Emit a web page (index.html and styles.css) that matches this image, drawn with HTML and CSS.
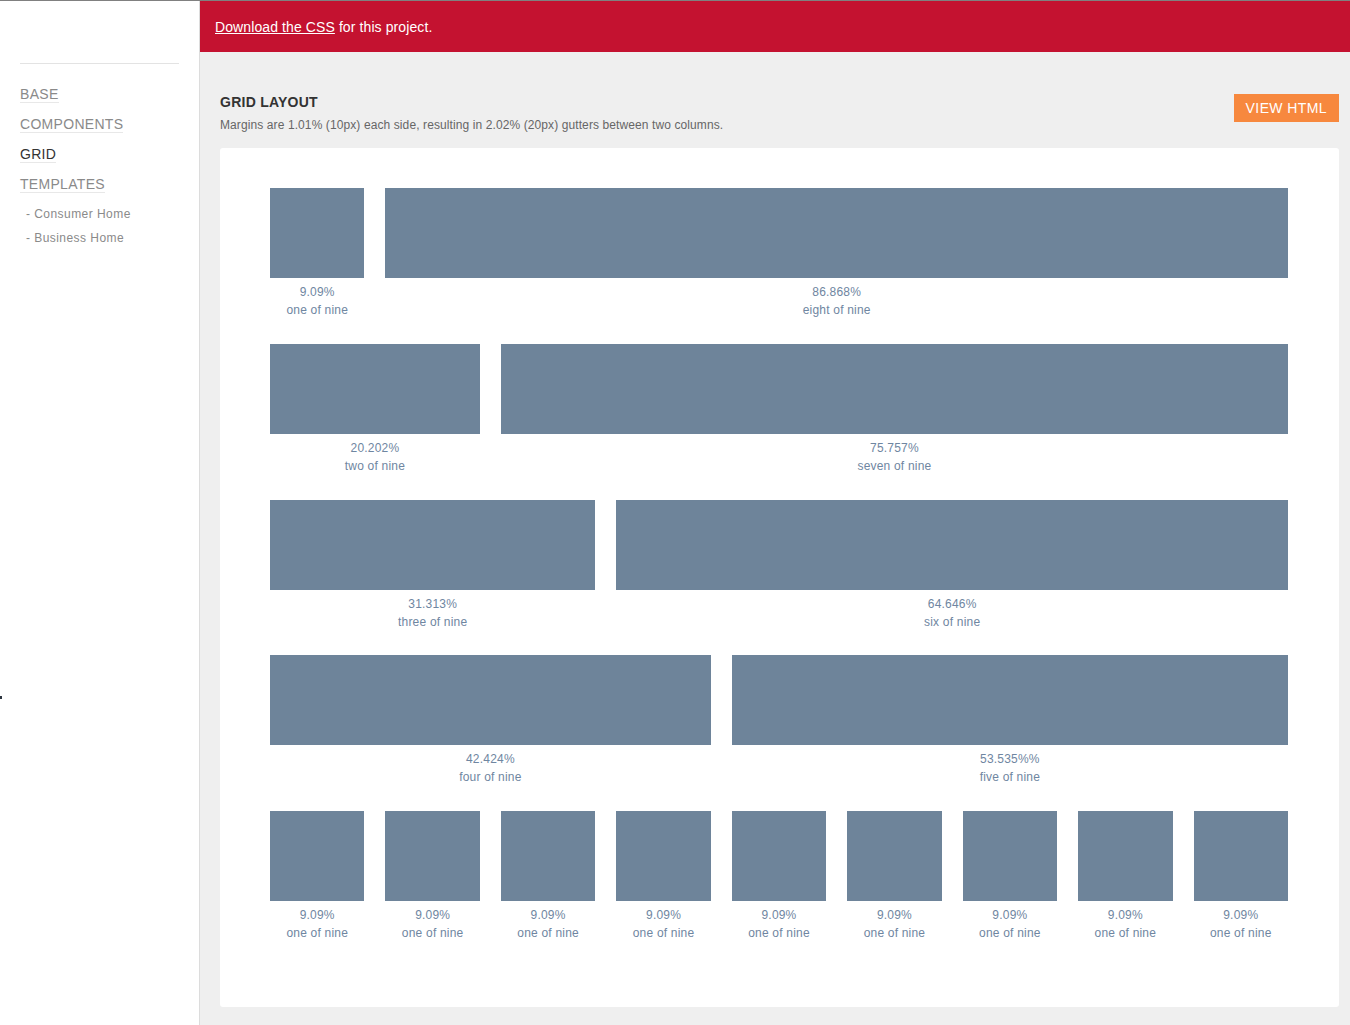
FILE: index.html
```html
<!DOCTYPE html>
<html lang="en">
<head>
<meta charset="utf-8">
<title>Grid Layout</title>
<link rel="stylesheet" href="styles.css">
</head>
<body>
<div class="page">
  <aside class="sidebar">
    <hr class="sidebar-rule">
    <nav class="nav">
      <div class="nav-item"><a href="#" class="nav-link">BASE</a></div>
      <div class="nav-item"><a href="#" class="nav-link">COMPONENTS</a></div>
      <div class="nav-item"><a href="#" class="nav-link nav-link-active">GRID</a></div>
      <div class="nav-item"><a href="#" class="nav-link">TEMPLATES</a></div>
      <ul class="subnav">
        <li><a href="#" class="subnav-link">- Consumer Home</a></li>
        <li><a href="#" class="subnav-link">- Business Home</a></li>
      </ul>
    </nav>
    <span class="stray-dot"></span>
  </aside>
  <main class="main">
    <div class="banner"><a href="#" class="banner-link">Download the CSS</a> for this project.</div>
    <section class="content">
      <div class="content-head">
        <div class="head-text">
          <h2 class="title">GRID LAYOUT</h2>
          <p class="subtitle">Margins are 1.01% (10px) each side, resulting in 2.02% (20px) gutters between two columns.</p>
        </div>
        <a href="#" class="btn">VIEW HTML</a>
      </div>
      <div class="card">
        <div class="grid-row">
          <div class="cell span-1"><div class="block"></div><div class="cap">9.09%</div><div class="cap">one of nine</div></div>
          <div class="cell span-8"><div class="block"></div><div class="cap">86.868%</div><div class="cap">eight of nine</div></div>
        </div>
        <div class="grid-row">
          <div class="cell span-2"><div class="block"></div><div class="cap">20.202%</div><div class="cap">two of nine</div></div>
          <div class="cell span-7"><div class="block"></div><div class="cap">75.757%</div><div class="cap">seven of nine</div></div>
        </div>
        <div class="grid-row">
          <div class="cell span-3"><div class="block"></div><div class="cap">31.313%</div><div class="cap">three of nine</div></div>
          <div class="cell span-6"><div class="block"></div><div class="cap">64.646%</div><div class="cap">six of nine</div></div>
        </div>
        <div class="grid-row">
          <div class="cell span-4"><div class="block"></div><div class="cap">42.424%</div><div class="cap">four of nine</div></div>
          <div class="cell span-5"><div class="block"></div><div class="cap">53.535%%</div><div class="cap">five of nine</div></div>
        </div>
        <div class="grid-row">
          <div class="cell span-1"><div class="block"></div><div class="cap">9.09%</div><div class="cap">one of nine</div></div>
          <div class="cell span-1"><div class="block"></div><div class="cap">9.09%</div><div class="cap">one of nine</div></div>
          <div class="cell span-1"><div class="block"></div><div class="cap">9.09%</div><div class="cap">one of nine</div></div>
          <div class="cell span-1"><div class="block"></div><div class="cap">9.09%</div><div class="cap">one of nine</div></div>
          <div class="cell span-1"><div class="block"></div><div class="cap">9.09%</div><div class="cap">one of nine</div></div>
          <div class="cell span-1"><div class="block"></div><div class="cap">9.09%</div><div class="cap">one of nine</div></div>
          <div class="cell span-1"><div class="block"></div><div class="cap">9.09%</div><div class="cap">one of nine</div></div>
          <div class="cell span-1"><div class="block"></div><div class="cap">9.09%</div><div class="cap">one of nine</div></div>
          <div class="cell span-1"><div class="block"></div><div class="cap">9.09%</div><div class="cap">one of nine</div></div>
        </div>
      </div>
    </section>
  </main>
</div>
</body>
</html>
```

FILE: styles.css
```css
* { box-sizing: border-box; }

html, body {
  margin: 0;
  padding: 0;
}

body {
  font-family: "Liberation Sans", Arial, sans-serif;
  border-top: 1px solid #808080;
  background: #efefef;
  overflow: hidden;
}

.page {
  display: flex;
  min-height: calc(100vh - 1px);
}

.sidebar {
  position: relative;
  width: 200px;
  flex: 0 0 200px;
  background: #fff;
  border-right: 1px solid #dcdcdc;
  padding: 62px 20px 0 20px;
}

.sidebar-rule {
  margin: 0;
  border: 0;
  border-top: 1px solid #e3e3e3;
  width: 159px;
}

.nav {
  margin-top: 22px;
}

.nav-item {
  margin-bottom: 13px;
  font-size: 14px;
  line-height: 16px;
}

.nav-link {
  display: inline-block;
  font-size: 14px;
  line-height: 16px;
  letter-spacing: 0.3px;
  color: #8a8a8a;
  text-decoration: none;
  border-bottom: 1px solid #e8e8e8;
}

.nav-link-active {
  color: #333;
}

.subnav {
  list-style: none;
  margin: -4px 0 0 0;
  padding: 0 0 0 6px;
}

.subnav li {
  font-size: 12px;
  line-height: 24px;
}

.subnav-link {
  font-size: 12px;
  letter-spacing: 0.45px;
  color: #8a8a8a;
  text-decoration: none;
}

.stray-dot {
  position: absolute;
  left: 0;
  top: 695px;
  width: 2px;
  height: 3px;
  background: #2d3540;
}

.main {
  flex: 1;
  display: flex;
  flex-direction: column;
  background: #efefef;
}

.banner {
  height: 51px;
  background: #c41230;
  color: #fff;
  font-size: 14px;
  line-height: 20px;
  letter-spacing: 0.1px;
  padding: 16px 15px 0 15px;
}

.banner-link {
  color: #fff;
  text-decoration: underline;
}

.content {
  padding: 41px 11px 18px 20px;
}

.content-head {
  display: flex;
  justify-content: space-between;
  align-items: flex-start;
}

.title {
  margin: 0;
  font-size: 14px;
  line-height: 18px;
  font-weight: bold;
  letter-spacing: 0.25px;
  color: #333;
}

.subtitle {
  margin: 5px 0 0 0;
  font-size: 12px;
  line-height: 18px;
  letter-spacing: 0.1px;
  color: #666;
}

.btn {
  margin-top: 1px;
  height: 28px;
  line-height: 28px;
  padding: 0 12px;
  background: #f7883e;
  color: #fff;
  font-size: 14px;
  letter-spacing: 0.4px;
  text-decoration: none;
}

.card {
  margin-top: 14px;
  background: #fff;
  border-radius: 3px;
  padding: 40px 51px 40px 50px;
}

.grid-row {
  display: grid;
  grid-template-columns: repeat(9, 1fr);
  column-gap: 21px;
  margin-bottom: 24.75px;
}

.cell {
  text-align: center;
}

.span-1 { grid-column: span 1; }
.span-2 { grid-column: span 2; }
.span-3 { grid-column: span 3; }
.span-4 { grid-column: span 4; }
.span-5 { grid-column: span 5; }
.span-6 { grid-column: span 6; }
.span-7 { grid-column: span 7; }
.span-8 { grid-column: span 8; }

.block {
  height: 90px;
  background: #6e849a;
  margin-bottom: 5px;
}

.cap {
  font-size: 12px;
  line-height: 18px;
  color: #6f86a1;
  letter-spacing: 0.2px;
}
```
